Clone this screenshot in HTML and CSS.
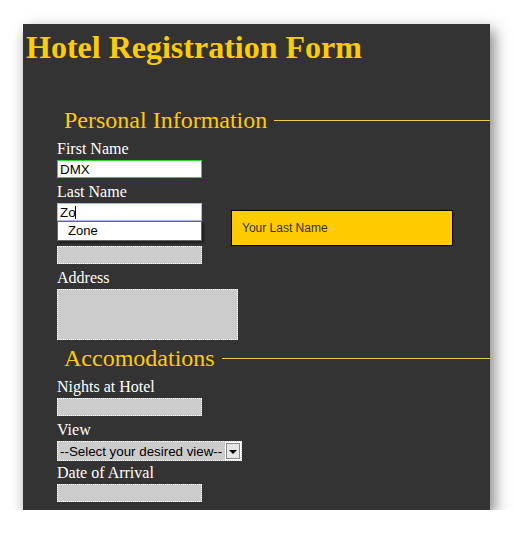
FILE: index.html
```html
<!DOCTYPE html>
<html lang="en">
	<head>
		<meta charset="UTF-8" />
		<meta name="viewport" content="width=device-width, initial-scale=1.0" />
		<title>Hotel Registration Form</title>
		<link rel="stylesheet" href="styles.css">
	</head>
	<body>
		<div class="screen">
			<div class="window">
				<h1>Hotel Registration Form</h1>
				<form class="reg-form">
					<fieldset>
						<legend>Personal Information</legend>
						<label for="firstName">First Name</label>
						<input type="text" id="firstName" class="valid" value="DMX" />
						<label for="lastName">Last Name</label>
						<div class="field-wrap">
							<input type="text" id="lastName" class="active" value="Zo" />
							<span class="caret"></span>
							<ul class="suggest">
								<li>Zone</li>
							</ul>
							<div class="tip">Your Last Name</div>
						</div>
						<label for="email" class="covered" aria-label="Email"></label>
						<input type="text" id="email" />
						<label for="address">Address</label>
						<textarea id="address"></textarea>
					</fieldset>
					<fieldset>
						<legend>Accomodations</legend>
						<label for="nights">Nights at Hotel</label>
						<input type="text" id="nights" />
						<label for="view">View</label>
						<div class="select-wrap">
							<select id="view">
								<option>--Select your desired view--</option>
								<option>Ocean</option>
								<option>City</option>
								<option>Garden</option>
							</select>
						</div>
						<label for="arrival">Date of Arrival</label>
						<input type="text" id="arrival" />
					</fieldset>
				</form>
			</div>
		</div>
	</body>
</html>
```
FILE: styles.css
```css
body {
	margin: 0;
	background: #fff;
	font-family: "Liberation Serif", "Times New Roman", serif;
}

.screen {
	padding: 24px 0 0 23px;
}

.window {
	width: 467px;
	height: 486px;
	background-color: #333;
	overflow: hidden;
	box-shadow: 4px 6px 14px rgba(0, 0, 0, 0.5);
}

h1 {
	margin: 5px 0 0 3px;
	font-size: 32px;
	line-height: 37px;
	font-weight: bold;
	color: #ffcc00;
}

.reg-form {
	margin-top: 40px;
	padding-left: 34px;
}

fieldset {
	margin: 0;
	padding: 6px 0 0 0;
	border: none;
	border-top: 1px solid #f0c838;
	min-width: 0;
}

fieldset + fieldset {
	margin-top: 4px;
}

legend {
	padding: 0 7px;
	font-size: 24px;
	line-height: 28px;
	color: #ffcc00;
}

label {
	display: block;
	font-size: 16px;
	line-height: 18px;
	margin-bottom: 2px;
	color: #fff;
}

label.covered {
	height: 18px;
}

input[type="text"],
textarea,
select {
	display: block;
	box-sizing: border-box;
	margin: 0 0 5px 0;
	padding: 1px 2px;
	font-family: "Liberation Sans", Arial, sans-serif;
	font-size: 13.33px;
	color: #000;
	background-color: #ccc;
	border: 1px dotted #fff;
	outline: none;
}

input[type="text"] {
	width: 145px;
	height: 18px;
}

input.valid {
	background-color: #fff;
	border: 1px solid #22e022;
}

input.active {
	background-color: #fff;
	border: 1px solid #a4bce6;
}

textarea {
	width: 181px;
	height: 51px;
	margin-bottom: 0;
	resize: none;
}

.field-wrap {
	position: relative;
}

.caret {
	position: absolute;
	left: 18px;
	top: 3px;
	width: 1px;
	height: 13px;
	background-color: #000;
}

.suggest {
	position: absolute;
	top: 18px;
	left: 0;
	box-sizing: border-box;
	width: 145px;
	height: 20px;
	margin: 0;
	padding: 0 0 0 10px;
	list-style: none;
	background-color: #fff;
	border: 1px solid #666;
	box-shadow: 2px 2px 2px rgba(0, 0, 0, 0.45);
	font-family: "Liberation Sans", Arial, sans-serif;
	font-size: 13px;
	line-height: 18px;
	color: #000;
}

.tip {
	position: absolute;
	top: 7px;
	left: 174px;
	box-sizing: border-box;
	width: 222px;
	padding: 10px;
	background-color: #ffcc00;
	border: 1px solid #000;
	font-family: "Liberation Sans", Arial, sans-serif;
	font-size: 12px;
	line-height: 14px;
	color: #333;
}

.select-wrap {
	position: relative;
	width: 185px;
	height: 20px;
	margin-bottom: 3px;
}

select {
	appearance: none;
	-webkit-appearance: none;
	width: 100%;
	height: 100%;
	padding: 0 0 0 2px;
	border-radius: 0;
}

.select-wrap::before {
	content: "";
	position: absolute;
	top: 1px;
	right: 1px;
	box-sizing: border-box;
	width: 16px;
	height: 18px;
	background-color: #e6e6e6;
	border: 1px solid #fff;
	box-shadow: inset 0 0 0 1px #8a8a8a;
	pointer-events: none;
}

.select-wrap::after {
	content: "";
	position: absolute;
	top: 9px;
	right: 5px;
	border-left: 4px solid transparent;
	border-right: 4px solid transparent;
	border-top: 4px solid #000;
	pointer-events: none;
}
```
